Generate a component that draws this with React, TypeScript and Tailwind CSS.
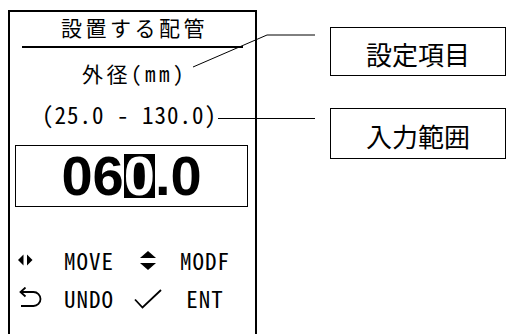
const mono = "font-['Noto_Sans_Mono_CJK_JP','Noto_Sans_CJK_JP',monospace]";

const LeftRight = () => (
  <svg width="22" height="12" viewBox="0 0 22 12">
    <polygon points="0,6 5.5,0.5 5.5,11.5" fill="#000" />
    <polygon points="14.5,6 9,0.5 9,11.5" fill="#000" />
  </svg>
);

const UpDown = () => (
  <svg width="18" height="19" viewBox="0 0 18 19">
    <polygon points="9,0 17,7 1,7" fill="#000" />
    <polygon points="9,19 17,12 1,12" fill="#000" />
  </svg>
);

const Undo = () => (
  <svg width="23" height="22" viewBox="0 0 23 22">
    <path
      d="M6.5 0.5 1.5 5 6.5 9.5M1.5 5h13a7 7 0 0 1 0 14H2"
      fill="none"
      stroke="#000"
      strokeWidth="1.8"
    />
  </svg>
);

const Check = () => (
  <svg width="28" height="20" viewBox="0 0 28 20">
    <path d="M1 10.5 8.5 18.5 27 1" fill="none" stroke="#000" strokeWidth="1.8" />
  </svg>
);

const Leaders = () => (
  <svg className="pointer-events-none absolute left-0 top-0" width="506" height="334">
    <polyline points="315,35 267,35 193,67" fill="none" stroke="#000" strokeWidth="1" />
    <line x1="315" y1="118.5" x2="218" y2="118.5" stroke="#000" strokeWidth="1" />
  </svg>
);

const Panel = () => (
  <div className={`ml-[8px] mt-[10px] flex h-[324px] w-[249px] flex-col border-2 border-b-0 border-black text-black ${mono}`}>
    <div className="h-[30px] pl-[4px] text-center text-[21px] leading-[30px] tracking-[3.5px]">設置する配管</div>
    <div className="mx-[12px] mt-[4px] h-[2px] bg-black" />
    <div className="mt-[10px] h-[30px] pl-[4px] text-center text-[21px] leading-[30px] tracking-[3.5px]">外径(mm)</div>
    <div className="mt-[11px] h-[30px] pr-[6px] text-center text-[23px] leading-[30px] tracking-[1px]">(25.0 - 130.0)</div>
    <div className="ml-[5px] mt-[16px] flex h-[62px] w-[233px] items-center justify-center border border-black font-['Liberation_Sans',Arial,sans-serif] text-[56px] font-bold leading-none">
      <span>06</span>
      <span className="inline-block h-[44px] bg-black leading-[44px] text-white">0</span>
      <span>.0</span>
    </div>
    <div className="mt-[38px] flex h-[30px] items-center text-[23px] leading-[30px] tracking-[1px]">
      <div className="flex w-[40px] pl-[8px]">
        <LeftRight />
      </div>
      <div className="w-[78px] text-center">MOVE</div>
      <div className="flex w-[40px] justify-center">
        <UpDown />
      </div>
      <div className="w-[74px] text-center">MODF</div>
    </div>
    <div className="mt-[8px] flex h-[30px] items-center text-[23px] leading-[30px] tracking-[1px]">
      <div className="flex w-[40px] pl-[9px]">
        <Undo />
      </div>
      <div className="w-[78px] text-center">UNDO</div>
      <div className="flex w-[40px] justify-center pt-[1px]">
        <Check />
      </div>
      <div className="w-[74px] text-center">ENT</div>
    </div>
  </div>
);

const Labels = () => (
  <div className="ml-[73px] mt-[27px] flex w-[176px] shrink-0 flex-col font-['Noto_Sans_CJK_JP',sans-serif] text-[26px] text-black">
    <div className="flex h-[49px] items-center justify-center border border-black pt-[3px]">設定項目</div>
    <div className="mt-[32px] flex h-[51px] items-center justify-center border border-black pt-[3px]">入力範囲</div>
  </div>
);

export default function App() {
  return (
    <div className="relative flex h-[334px] w-[506px] overflow-hidden bg-white">
      <Panel />
      <Labels />
      <Leaders />
    </div>
  );
}
